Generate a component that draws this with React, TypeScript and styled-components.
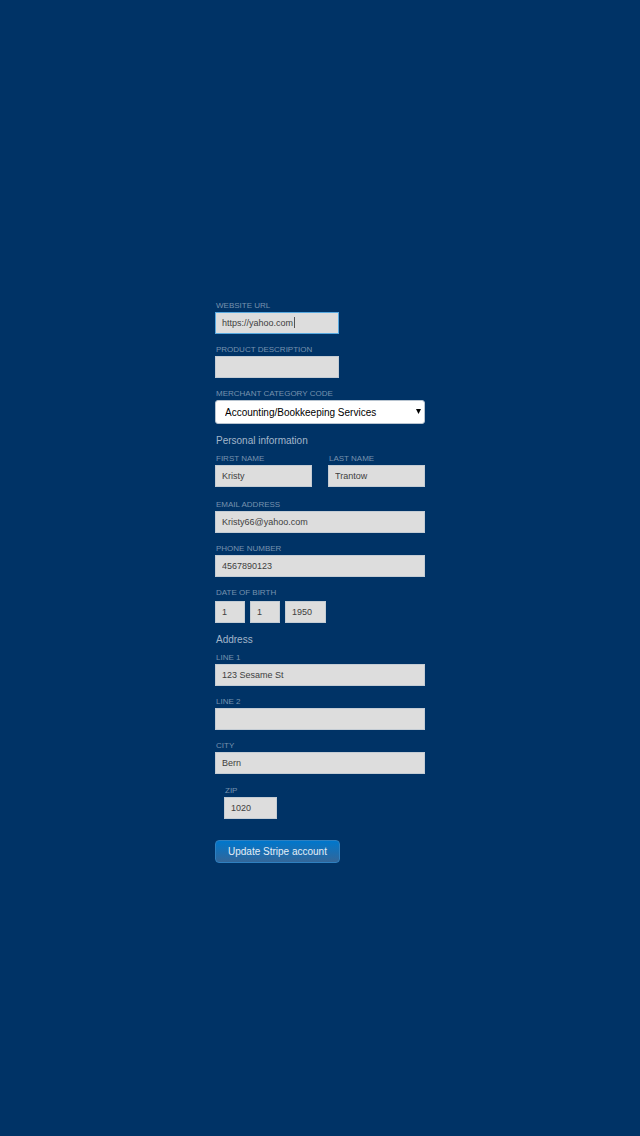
import React from 'react';
import styled, { createGlobalStyle } from 'styled-components';

const GlobalStyle = createGlobalStyle`
  *, *::before, *::after { box-sizing: border-box; }
  body {
    margin: 0;
    background: #003366;
    font-family: "Liberation Sans", Arial, sans-serif;
  }
`;

const Page = styled.main`
  display: flex;
  justify-content: center;
  min-height: 100vh;
  padding: 300px 16px 32px;
  background: #003366;
`;

const Form = styled.form`
  display: flex;
  flex-direction: column;
  width: 100%;
  max-width: 210px;
`;

const Field = styled.div<{ $width?: number; $gap?: number; $indent?: number }>`
  display: flex;
  flex-direction: column;
  width: 100%;
  max-width: ${(p) => (p.$width ? `${p.$width}px` : 'none')};
  margin-bottom: ${(p) => p.$gap ?? 10}px;
  margin-left: ${(p) => p.$indent ?? 0}px;
`;

const Label = styled.label`
  padding-left: 1px;
  color: #7692ae;
  font-size: 8px;
  line-height: 12px;
  text-transform: uppercase;
`;

const Input = styled.input`
  width: 100%;
  height: 22px;
  padding: 0 6px;
  border: 1px solid #c4ccd4;
  border-radius: 0;
  background: #dddddd;
  color: #404040;
  font-family: inherit;
  font-size: 9px;
  outline: none;

  &:focus {
    border-color: #57a9e0;
    caret-color: transparent;
  }
`;

const InputWrap = styled.div`
  position: relative;
  display: flex;
`;

const Caret = styled.span`
  position: absolute;
  top: 5px;
  left: 79px;
  width: 1px;
  height: 11px;
  background: #555555;
`;

const SelectWrap = styled.div`
  position: relative;
  display: flex;
`;

const Select = styled.select`
  appearance: none;
  width: 100%;
  height: 24px;
  padding: 0 16px 0 9px;
  border: 1px solid #b8c4d0;
  border-radius: 3px;
  background: #ffffff;
  color: #000000;
  font-family: inherit;
  font-size: 10px;
`;

const Arrow = styled.svg`
  position: absolute;
  top: 9px;
  right: 4px;
  width: 5px;
  height: 5px;
  pointer-events: none;
`;

const Heading = styled.h2`
  margin: 11px 0 6px;
  padding-left: 1px;
  color: #a3b6ca;
  font-size: 10px;
  font-weight: normal;
  line-height: 12px;
`;

const NameRow = styled.div`
  display: grid;
  grid-template-columns: 1fr 1fr;
  gap: 16px;
`;

const DateGroup = styled.fieldset`
  display: flex;
  flex-direction: column;
  gap: 2px;
  min-width: 0;
  margin: 0;
  padding: 0;
  border: 0;
`;

const DateRow = styled.div`
  display: grid;
  grid-template-columns: 30px 30px 41px;
  gap: 5px;
`;

const Submit = styled.button`
  align-self: flex-start;
  height: 23px;
  margin-top: 11px;
  padding: 0 12px;
  border: 1px solid #2f80c0;
  border-radius: 4px;
  background: linear-gradient(#0077cc, #336699);
  color: #e6eef6;
  font-family: inherit;
  font-size: 10px;
  cursor: pointer;
`;

type TextFieldProps = {
  id: string;
  label: string;
  value?: string;
  width?: number;
  gap?: number;
  indent?: number;
};

function TextField({ id, label, value = '', width, gap, indent }: TextFieldProps) {
  return (
    <Field $width={width} $gap={gap} $indent={indent}>
      <Label htmlFor={id}>{label}</Label>
      <Input id={id} defaultValue={value} />
    </Field>
  );
}

export default function App() {
  return (
    <>
      <GlobalStyle />
      <Page>
        <Form onSubmit={(e: React.FormEvent) => e.preventDefault()}>
          <Field $width={124}>
            <Label htmlFor="website">Website URL</Label>
            <InputWrap>
              <Input id="website" defaultValue="https://yahoo.com" autoFocus />
              <Caret />
            </InputWrap>
          </Field>
          <TextField id="product" label="Product description" width={124} />
          <Field $gap={0}>
            <Label htmlFor="category">Merchant category code</Label>
            <SelectWrap>
              <Select id="category" defaultValue="accounting">
                <option value="accounting">Accounting/Bookkeeping Services</option>
              </Select>
              <Arrow viewBox="0 0 5 5" aria-hidden="true">
                <path d="M0 0H5L2.5 5Z" fill="#000000" />
              </Arrow>
            </SelectWrap>
          </Field>

          <Heading>Personal information</Heading>
          <NameRow>
            <TextField id="first" label="First name" value="Kristy" gap={12} />
            <TextField id="last" label="Last name" value="Trantow" gap={12} />
          </NameRow>
          <TextField id="email" label="Email address" value="Kristy66@yahoo.com" />
          <TextField id="phone" label="Phone number" value="4567890123" />
          <DateGroup>
            <Label htmlFor="month">Date of birth</Label>
            <DateRow>
              <Input id="month" aria-label="Month" defaultValue="1" />
              <Input aria-label="Day" defaultValue="1" />
              <Input aria-label="Year" defaultValue="1950" />
            </DateRow>
          </DateGroup>

          <Heading>Address</Heading>
          <TextField id="line1" label="Line 1" value="123 Sesame St" />
          <TextField id="line2" label="Line 2" />
          <TextField id="city" label="City" value="Bern" gap={11} />
          <TextField id="zip" label="ZIP" value="1020" width={53} indent={9} />

          <Submit type="submit">Update Stripe account</Submit>
        </Form>
      </Page>
    </>
  );
}
